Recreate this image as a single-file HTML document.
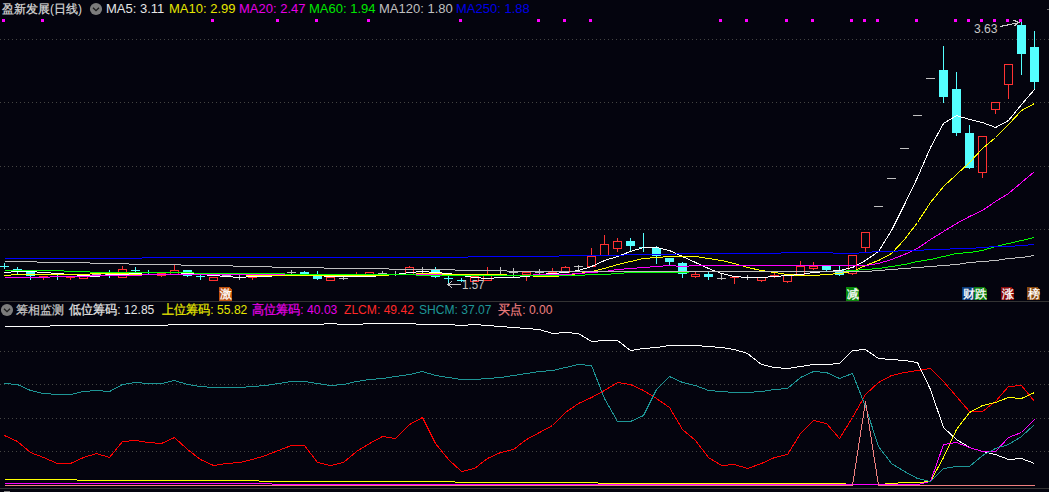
<!DOCTYPE html>
<html><head><meta charset="utf-8">
<style>
html,body{margin:0;padding:0;background:#04040e;}
#root{position:relative;width:1049px;height:492px;overflow:hidden;background:#04040e;font-family:"Liberation Sans",sans-serif;}
svg{position:absolute;left:0;top:0;}
.t{position:absolute;white-space:nowrap;line-height:16px;transform-origin:0 0;}
.z{-webkit-text-stroke:0.25px currentColor;}
.b{position:absolute;width:13px;height:14px;font-size:12px;line-height:14px;color:#fff;text-align:center;-webkit-text-stroke:0.3px #fff;}
</style></head><body>
<div id="root">
<svg width="1049" height="492" viewBox="0 0 1049 492" shape-rendering="crispEdges">
<line x1="0" y1="39.5" x2="1049" y2="39.5" stroke="#444442" stroke-width="1" stroke-dasharray="1 3"/>
<line x1="0" y1="102.5" x2="1049" y2="102.5" stroke="#444442" stroke-width="1" stroke-dasharray="1 3"/>
<line x1="0" y1="166.5" x2="1049" y2="166.5" stroke="#444442" stroke-width="1" stroke-dasharray="1 3"/>
<line x1="0" y1="229.5" x2="1049" y2="229.5" stroke="#444442" stroke-width="1" stroke-dasharray="1 3"/>
<line x1="0" y1="351.5" x2="1049" y2="351.5" stroke="#444442" stroke-width="1" stroke-dasharray="1 3"/>
<line x1="0" y1="384.5" x2="1049" y2="384.5" stroke="#444442" stroke-width="1" stroke-dasharray="1 3"/>
<line x1="0" y1="418.5" x2="1049" y2="418.5" stroke="#444442" stroke-width="1" stroke-dasharray="1 3"/>
<line x1="0" y1="451.5" x2="1049" y2="451.5" stroke="#444442" stroke-width="1" stroke-dasharray="1 3"/>
<rect x="0" y="301" width="1049" height="1" fill="#333333"/>
<rect x="0" y="488" width="1049" height="1" fill="#333333"/>
<rect x="4" y="263" width="1" height="6" fill="#54ffff"/>
<rect x="0" y="266" width="9" height="1" fill="#54ffff"/>
<rect x="17" y="267" width="1" height="8" fill="#54ffff"/>
<rect x="13" y="269" width="9" height="1" fill="#54ffff"/>
<rect x="30" y="272" width="1" height="8" fill="#54ffff"/>
<rect x="26" y="272" width="9" height="4" fill="#54ffff"/>
<rect x="43" y="276" width="1" height="4" fill="#ff3232"/>
<rect x="39" y="276" width="9" height="1" fill="#ff3232"/>
<rect x="57" y="275" width="1" height="5" fill="#54ffff"/>
<rect x="53" y="276" width="9" height="1" fill="#54ffff"/>
<rect x="70" y="277" width="1" height="3" fill="#ff3232"/>
<rect x="66" y="277" width="9" height="1" fill="#ff3232"/>
<rect x="83" y="274" width="1" height="5" fill="#ff3232"/>
<rect x="79" y="274" width="9" height="5" fill="#04040e"/>
<rect x="79.5" y="274.5" width="8" height="4" fill="none" stroke="#ff3232" stroke-width="1"/>
<rect x="96" y="273" width="1" height="4" fill="#c0c0c0"/>
<rect x="92" y="274" width="9" height="1" fill="#c0c0c0"/>
<rect x="109" y="270" width="1" height="8" fill="#54ffff"/>
<rect x="105" y="274" width="9" height="2" fill="#54ffff"/>
<rect x="122" y="266" width="1" height="12" fill="#ff3232"/>
<rect x="118" y="269" width="9" height="9" fill="#04040e"/>
<rect x="118.5" y="269.5" width="8" height="8" fill="none" stroke="#ff3232" stroke-width="1"/>
<rect x="135" y="267" width="1" height="6" fill="#54ffff"/>
<rect x="131" y="270" width="9" height="1" fill="#54ffff"/>
<rect x="148" y="270" width="1" height="5" fill="#54ffff"/>
<rect x="144" y="272" width="9" height="1" fill="#54ffff"/>
<rect x="161" y="273" width="1" height="4" fill="#ff3232"/>
<rect x="157" y="273" width="9" height="3" fill="#04040e"/>
<rect x="157.5" y="273.5" width="8" height="2" fill="none" stroke="#ff3232" stroke-width="1"/>
<rect x="174" y="265" width="1" height="10" fill="#ff3232"/>
<rect x="170" y="270" width="9" height="5" fill="#04040e"/>
<rect x="170.5" y="270.5" width="8" height="4" fill="none" stroke="#ff3232" stroke-width="1"/>
<rect x="187" y="270" width="1" height="7" fill="#54ffff"/>
<rect x="183" y="270" width="9" height="6" fill="#54ffff"/>
<rect x="200" y="274" width="1" height="6" fill="#54ffff"/>
<rect x="196" y="276" width="9" height="1" fill="#54ffff"/>
<rect x="213" y="277" width="1" height="4" fill="#ff3232"/>
<rect x="209" y="277" width="9" height="4" fill="#04040e"/>
<rect x="209.5" y="277.5" width="8" height="3" fill="none" stroke="#ff3232" stroke-width="1"/>
<rect x="222" y="275" width="9" height="1" fill="#c0c0c0"/>
<rect x="239" y="275" width="1" height="5" fill="#c0c0c0"/>
<rect x="235" y="277" width="9" height="1" fill="#c0c0c0"/>
<rect x="252" y="275" width="1" height="5" fill="#ff3232"/>
<rect x="248" y="275" width="9" height="3" fill="#04040e"/>
<rect x="248.5" y="275.5" width="8" height="2" fill="none" stroke="#ff3232" stroke-width="1"/>
<rect x="261" y="275" width="9" height="1" fill="#ff3232"/>
<rect x="274" y="275" width="9" height="1" fill="#c0c0c0"/>
<rect x="291" y="270" width="1" height="5" fill="#c0c0c0"/>
<rect x="287" y="272" width="9" height="1" fill="#c0c0c0"/>
<rect x="304" y="271" width="1" height="4" fill="#54ffff"/>
<rect x="300" y="272" width="9" height="2" fill="#54ffff"/>
<rect x="317" y="271" width="1" height="9" fill="#54ffff"/>
<rect x="313" y="276" width="9" height="3" fill="#54ffff"/>
<rect x="330" y="277" width="1" height="4" fill="#ff3232"/>
<rect x="326" y="277" width="9" height="4" fill="#04040e"/>
<rect x="326.5" y="277.5" width="8" height="3" fill="none" stroke="#ff3232" stroke-width="1"/>
<rect x="343" y="276" width="1" height="4" fill="#c0c0c0"/>
<rect x="339" y="278" width="9" height="1" fill="#c0c0c0"/>
<rect x="356" y="272" width="1" height="4" fill="#ff3232"/>
<rect x="352" y="274" width="9" height="1" fill="#ff3232"/>
<rect x="369" y="272" width="1" height="3" fill="#ff3232"/>
<rect x="365" y="272" width="9" height="3" fill="#04040e"/>
<rect x="365.5" y="272.5" width="8" height="2" fill="none" stroke="#ff3232" stroke-width="1"/>
<rect x="382" y="271" width="1" height="4" fill="#c0c0c0"/>
<rect x="378" y="273" width="9" height="1" fill="#c0c0c0"/>
<rect x="395" y="271" width="1" height="5" fill="#c0c0c0"/>
<rect x="391" y="274" width="9" height="1" fill="#c0c0c0"/>
<rect x="409" y="266" width="1" height="9" fill="#ff3232"/>
<rect x="405" y="267" width="9" height="8" fill="#04040e"/>
<rect x="405.5" y="267.5" width="8" height="7" fill="none" stroke="#ff3232" stroke-width="1"/>
<rect x="422" y="267" width="1" height="7" fill="#c0c0c0"/>
<rect x="418" y="271" width="9" height="1" fill="#c0c0c0"/>
<rect x="435" y="267" width="1" height="11" fill="#54ffff"/>
<rect x="431" y="270" width="9" height="7" fill="#54ffff"/>
<rect x="448" y="276" width="1" height="9" fill="#54ffff"/>
<rect x="444" y="278" width="9" height="1" fill="#54ffff"/>
<rect x="461" y="278" width="1" height="4" fill="#54ffff"/>
<rect x="457" y="280" width="9" height="1" fill="#54ffff"/>
<rect x="474" y="276" width="1" height="6" fill="#ff3232"/>
<rect x="470" y="276" width="9" height="6" fill="#04040e"/>
<rect x="470.5" y="276.5" width="8" height="5" fill="none" stroke="#ff3232" stroke-width="1"/>
<rect x="487" y="267" width="1" height="14" fill="#ff3232"/>
<rect x="483" y="275" width="9" height="6" fill="#04040e"/>
<rect x="483.5" y="275.5" width="8" height="5" fill="none" stroke="#ff3232" stroke-width="1"/>
<rect x="500" y="267" width="1" height="9" fill="#c0c0c0"/>
<rect x="496" y="275" width="9" height="1" fill="#c0c0c0"/>
<rect x="513" y="268" width="1" height="10" fill="#c0c0c0"/>
<rect x="509" y="272" width="9" height="1" fill="#c0c0c0"/>
<rect x="526" y="272" width="1" height="9" fill="#ff3232"/>
<rect x="522" y="272" width="9" height="3" fill="#04040e"/>
<rect x="522.5" y="272.5" width="8" height="2" fill="none" stroke="#ff3232" stroke-width="1"/>
<rect x="539" y="269" width="1" height="6" fill="#c0c0c0"/>
<rect x="535" y="272" width="9" height="1" fill="#c0c0c0"/>
<rect x="552" y="268" width="1" height="8" fill="#ff3232"/>
<rect x="548" y="272" width="9" height="4" fill="#04040e"/>
<rect x="548.5" y="272.5" width="8" height="3" fill="none" stroke="#ff3232" stroke-width="1"/>
<rect x="565" y="266" width="1" height="7" fill="#ff3232"/>
<rect x="561" y="267" width="9" height="6" fill="#04040e"/>
<rect x="561.5" y="267.5" width="8" height="5" fill="none" stroke="#ff3232" stroke-width="1"/>
<rect x="578" y="265" width="1" height="6" fill="#c0c0c0"/>
<rect x="574" y="266" width="9" height="1" fill="#c0c0c0"/>
<rect x="591" y="248" width="1" height="19" fill="#ff3232"/>
<rect x="587" y="256" width="9" height="11" fill="#04040e"/>
<rect x="587.5" y="256.5" width="8" height="10" fill="none" stroke="#ff3232" stroke-width="1"/>
<rect x="604" y="235" width="1" height="21" fill="#ff3232"/>
<rect x="600" y="244" width="9" height="12" fill="#04040e"/>
<rect x="600.5" y="244.5" width="8" height="11" fill="none" stroke="#ff3232" stroke-width="1"/>
<rect x="617" y="238" width="1" height="14" fill="#ff3232"/>
<rect x="613" y="241" width="9" height="8" fill="#04040e"/>
<rect x="613.5" y="241.5" width="8" height="7" fill="none" stroke="#ff3232" stroke-width="1"/>
<rect x="630" y="238" width="1" height="13" fill="#54ffff"/>
<rect x="626" y="241" width="9" height="5" fill="#54ffff"/>
<rect x="643" y="233" width="1" height="19" fill="#54ffff"/>
<rect x="639" y="247" width="9" height="1" fill="#54ffff"/>
<rect x="656" y="246" width="1" height="18" fill="#54ffff"/>
<rect x="652" y="248" width="9" height="8" fill="#54ffff"/>
<rect x="669" y="258" width="1" height="8" fill="#54ffff"/>
<rect x="665" y="258" width="9" height="4" fill="#54ffff"/>
<rect x="682" y="262" width="1" height="16" fill="#54ffff"/>
<rect x="678" y="263" width="9" height="11" fill="#54ffff"/>
<rect x="695" y="272" width="1" height="6" fill="#ff3232"/>
<rect x="691" y="274" width="9" height="3" fill="#04040e"/>
<rect x="691.5" y="274.5" width="8" height="2" fill="none" stroke="#ff3232" stroke-width="1"/>
<rect x="708" y="272" width="1" height="8" fill="#54ffff"/>
<rect x="704" y="274" width="9" height="3" fill="#54ffff"/>
<rect x="721" y="273" width="1" height="7" fill="#c0c0c0"/>
<rect x="717" y="278" width="9" height="1" fill="#c0c0c0"/>
<rect x="734" y="277" width="1" height="7" fill="#ff3232"/>
<rect x="730" y="277" width="9" height="1" fill="#ff3232"/>
<rect x="747" y="275" width="1" height="5" fill="#c0c0c0"/>
<rect x="743" y="277" width="9" height="1" fill="#c0c0c0"/>
<rect x="761" y="277" width="1" height="5" fill="#ff3232"/>
<rect x="757" y="277" width="9" height="4" fill="#04040e"/>
<rect x="757.5" y="277.5" width="8" height="3" fill="none" stroke="#ff3232" stroke-width="1"/>
<rect x="774" y="273" width="1" height="5" fill="#ff3232"/>
<rect x="770" y="275" width="9" height="1" fill="#ff3232"/>
<rect x="787" y="275" width="1" height="8" fill="#ff3232"/>
<rect x="783" y="275" width="9" height="7" fill="#04040e"/>
<rect x="783.5" y="275.5" width="8" height="6" fill="none" stroke="#ff3232" stroke-width="1"/>
<rect x="800" y="261" width="1" height="15" fill="#ff3232"/>
<rect x="796" y="266" width="9" height="10" fill="#04040e"/>
<rect x="796.5" y="266.5" width="8" height="9" fill="none" stroke="#ff3232" stroke-width="1"/>
<rect x="813" y="262" width="1" height="8" fill="#ff3232"/>
<rect x="809" y="266" width="9" height="3" fill="#04040e"/>
<rect x="809.5" y="266.5" width="8" height="2" fill="none" stroke="#ff3232" stroke-width="1"/>
<rect x="826" y="266" width="1" height="5" fill="#54ffff"/>
<rect x="822" y="266" width="9" height="4" fill="#54ffff"/>
<rect x="839" y="266" width="1" height="10" fill="#54ffff"/>
<rect x="835" y="270" width="9" height="5" fill="#54ffff"/>
<rect x="852" y="255" width="1" height="20" fill="#ff3232"/>
<rect x="848" y="255" width="9" height="19" fill="#04040e"/>
<rect x="848.5" y="255.5" width="8" height="18" fill="none" stroke="#ff3232" stroke-width="1"/>
<rect x="865" y="232" width="1" height="21" fill="#ff3232"/>
<rect x="861" y="232" width="9" height="16" fill="#04040e"/>
<rect x="861.5" y="232.5" width="8" height="15" fill="none" stroke="#ff3232" stroke-width="1"/>
<rect x="874" y="206" width="9" height="1" fill="#c0c0c0"/>
<rect x="887" y="178" width="9" height="1" fill="#c0c0c0"/>
<rect x="900" y="148" width="9" height="1" fill="#c0c0c0"/>
<rect x="913" y="115" width="9" height="1" fill="#c0c0c0"/>
<rect x="926" y="78" width="9" height="1" fill="#c0c0c0"/>
<rect x="943" y="46" width="1" height="57" fill="#54ffff"/>
<rect x="939" y="70" width="9" height="27" fill="#54ffff"/>
<rect x="956" y="72" width="1" height="64" fill="#54ffff"/>
<rect x="952" y="89" width="9" height="44" fill="#54ffff"/>
<rect x="969" y="125" width="1" height="44" fill="#54ffff"/>
<rect x="965" y="133" width="9" height="35" fill="#54ffff"/>
<rect x="982" y="136" width="1" height="42" fill="#ff3232"/>
<rect x="978" y="136" width="9" height="37" fill="#04040e"/>
<rect x="978.5" y="136.5" width="8" height="36" fill="none" stroke="#ff3232" stroke-width="1"/>
<rect x="995" y="102" width="1" height="12" fill="#ff3232"/>
<rect x="991" y="102" width="9" height="8" fill="#04040e"/>
<rect x="991.5" y="102.5" width="8" height="7" fill="none" stroke="#ff3232" stroke-width="1"/>
<rect x="1008" y="64" width="1" height="35" fill="#ff3232"/>
<rect x="1004" y="64" width="9" height="21" fill="#04040e"/>
<rect x="1004.5" y="64.5" width="8" height="20" fill="none" stroke="#ff3232" stroke-width="1"/>
<rect x="1021" y="22" width="1" height="53" fill="#54ffff"/>
<rect x="1017" y="25" width="9" height="29" fill="#54ffff"/>
<rect x="1034" y="31" width="1" height="59" fill="#54ffff"/>
<rect x="1030" y="47" width="9" height="35" fill="#54ffff"/>
<polyline points="4.5,272.5 17.5,271.5 30.5,271.5 43.5,272.5 57.5,273.5 70.5,274.5 83.5,275.5 96.5,276.5 109.5,274.5 122.5,274.5 135.5,273.5 148.5,272.5 161.5,272.5 174.5,272.5 187.5,273.5 200.5,274.5 213.5,275.5 226.5,276.5 239.5,277.5 252.5,276.5 265.5,276.5 278.5,275.5 291.5,275.5 304.5,275.5 317.5,275.5 330.5,276.5 343.5,276.5 356.5,276.5 369.5,276.5 382.5,275.5 395.5,274.5 409.5,272.5 422.5,271.5 435.5,272.5 448.5,273.5 461.5,275.5 474.5,277.5 487.5,278.5 500.5,277.5 513.5,277.5 526.5,276.5 539.5,274.5 552.5,273.5 565.5,272.5 578.5,270.5 591.5,266.5 604.5,260.5 617.5,256.5 630.5,251.5 643.5,247.5 656.5,247.5 669.5,250.5 682.5,256.5 695.5,262.5 708.5,268.5 721.5,273.5 734.5,276.5 747.5,277.5 761.5,277.5 774.5,276.5 787.5,275.5 800.5,274.5 813.5,272.5 826.5,271.5 839.5,270.5 852.5,267.5 865.5,260.5 878.5,251.5 891.5,230.5 904.5,204.5 917.5,177.5 930.5,147.5 943.5,123.5 956.5,115.5 969.5,119.5 982.5,122.5 995.5,127.5 1008.5,120.5 1021.5,104.5 1034.5,89.5" fill="none" stroke="#ffffff" stroke-width="1" stroke-linejoin="miter" stroke-miterlimit="2" />
<polyline points="4.5,275.5 17.5,274.5 30.5,274.5 43.5,274.5 57.5,274.5 70.5,274.5 83.5,274.5 96.5,273.5 109.5,273.5 122.5,273.5 135.5,274.5 148.5,274.5 161.5,274.5 174.5,274.5 187.5,274.5 200.5,274.5 213.5,274.5 226.5,274.5 239.5,274.5 252.5,275.5 265.5,275.5 278.5,275.5 291.5,275.5 304.5,275.5 317.5,275.5 330.5,275.5 343.5,275.5 356.5,275.5 369.5,275.5 382.5,275.5 395.5,274.5 409.5,274.5 422.5,273.5 435.5,273.5 448.5,274.5 461.5,274.5 474.5,274.5 487.5,274.5 500.5,274.5 513.5,275.5 526.5,275.5 539.5,276.5 552.5,276.5 565.5,275.5 578.5,273.5 591.5,271.5 604.5,268.5 617.5,264.5 630.5,261.5 643.5,258.5 656.5,257.5 669.5,256.5 682.5,256.5 695.5,256.5 708.5,258.5 721.5,260.5 734.5,263.5 747.5,267.5 761.5,270.5 774.5,272.5 787.5,274.5 800.5,275.5 813.5,275.5 826.5,274.5 839.5,273.5 852.5,271.5 865.5,265.5 878.5,260.5 891.5,253.5 904.5,239.5 917.5,222.5 930.5,202.5 943.5,186.5 956.5,174.5 969.5,162.5 982.5,148.5 995.5,137.5 1008.5,124.5 1021.5,110.5 1034.5,103.5" fill="none" stroke="#ffff00" stroke-width="1" stroke-linejoin="miter" stroke-miterlimit="2" />
<polyline points="4.5,277.5 17.5,277.5 30.5,277.5 43.5,277.5 57.5,276.5 70.5,276.5 83.5,276.5 96.5,275.5 109.5,275.5 122.5,275.5 135.5,275.5 148.5,274.5 161.5,274.5 174.5,274.5 187.5,274.5 200.5,274.5 213.5,274.5 226.5,274.5 239.5,274.5 252.5,274.5 265.5,274.5 278.5,274.5 291.5,274.5 304.5,274.5 317.5,274.5 330.5,274.5 343.5,274.5 356.5,274.5 369.5,274.5 382.5,274.5 395.5,274.5 409.5,274.5 422.5,274.5 435.5,274.5 448.5,275.5 461.5,275.5 474.5,275.5 487.5,275.5 500.5,275.5 513.5,275.5 526.5,275.5 539.5,274.5 552.5,274.5 565.5,274.5 578.5,273.5 591.5,272.5 604.5,271.5 617.5,269.5 630.5,268.5 643.5,267.5 656.5,266.5 669.5,265.5 682.5,266.5 695.5,265.5 708.5,265.5 721.5,265.5 734.5,265.5 747.5,265.5 761.5,265.5 774.5,265.5 787.5,265.5 800.5,265.5 813.5,265.5 826.5,265.5 839.5,265.5 852.5,265.5 865.5,265.5 878.5,263.5 891.5,259.5 904.5,254.5 917.5,248.5 930.5,239.5 943.5,231.5 956.5,223.5 969.5,216.5 982.5,210.5 995.5,201.5 1008.5,193.5 1021.5,182.5 1034.5,171.5" fill="none" stroke="#ff00ff" stroke-width="1" stroke-linejoin="miter" stroke-miterlimit="2" />
<polyline points="4.5,270.5 17.5,270.5 30.5,270.5 43.5,270.5 57.5,270.5 70.5,271.5 83.5,271.5 96.5,272.5 109.5,272.5 122.5,272.5 135.5,272.5 148.5,272.5 161.5,272.5 174.5,272.5 187.5,272.5 200.5,273.5 213.5,273.5 226.5,273.5 239.5,273.5 252.5,273.5 265.5,273.5 278.5,273.5 291.5,274.5 304.5,274.5 317.5,274.5 330.5,274.5 343.5,274.5 356.5,274.5 369.5,274.5 382.5,274.5 395.5,274.5 409.5,274.5 422.5,275.5 435.5,275.5 448.5,275.5 461.5,275.5 474.5,275.5 487.5,275.5 500.5,275.5 513.5,275.5 526.5,275.5 539.5,275.5 552.5,275.5 565.5,275.5 578.5,275.5 591.5,274.5 604.5,274.5 617.5,273.5 630.5,272.5 643.5,272.5 656.5,272.5 669.5,272.5 682.5,272.5 695.5,271.5 708.5,271.5 721.5,271.5 734.5,271.5 747.5,271.5 761.5,271.5 774.5,271.5 787.5,271.5 800.5,271.5 813.5,271.5 826.5,271.5 839.5,271.5 852.5,270.5 865.5,269.5 878.5,268.5 891.5,266.5 904.5,264.5 917.5,261.5 930.5,259.5 943.5,256.5 956.5,253.5 969.5,252.5 982.5,250.5 995.5,246.5 1008.5,243.5 1021.5,240.5 1034.5,237.5" fill="none" stroke="#00ff00" stroke-width="1" stroke-linejoin="miter" stroke-miterlimit="2" />
<polyline points="4.5,261.5 17.5,261.5 30.5,261.5 43.5,262.5 57.5,262.5 70.5,262.5 83.5,262.5 96.5,263.5 109.5,263.5 122.5,263.5 135.5,264.5 148.5,264.5 161.5,264.5 174.5,264.5 187.5,265.5 200.5,265.5 213.5,265.5 226.5,265.5 239.5,266.5 252.5,266.5 265.5,266.5 278.5,267.5 291.5,267.5 304.5,267.5 317.5,267.5 330.5,268.5 343.5,268.5 356.5,268.5 369.5,268.5 382.5,268.5 395.5,269.5 409.5,269.5 422.5,269.5 435.5,269.5 448.5,269.5 461.5,270.5 474.5,270.5 487.5,270.5 500.5,270.5 513.5,271.5 526.5,271.5 539.5,271.5 552.5,271.5 565.5,271.5 578.5,271.5 591.5,271.5 604.5,271.5 617.5,271.5 630.5,271.5 643.5,271.5 656.5,271.5 669.5,271.5 682.5,271.5 695.5,271.5 708.5,271.5 721.5,271.5 734.5,271.5 747.5,271.5 761.5,271.5 774.5,271.5 787.5,271.5 800.5,271.5 813.5,271.5 826.5,271.5 839.5,271.5 852.5,271.5 865.5,271.5 878.5,270.5 891.5,269.5 904.5,268.5 917.5,267.5 930.5,266.5 943.5,265.5 956.5,264.5 969.5,262.5 982.5,261.5 995.5,260.5 1008.5,258.5 1021.5,257.5 1034.5,255.5" fill="none" stroke="#c0c0c0" stroke-width="1" stroke-linejoin="miter" stroke-miterlimit="2" />
<polyline points="4.5,258.5 17.5,258.5 30.5,258.5 43.5,258.5 57.5,258.5 70.5,258.5 83.5,258.5 96.5,258.5 109.5,258.5 122.5,258.5 135.5,258.5 148.5,257.5 161.5,257.5 174.5,257.5 187.5,257.5 200.5,257.5 213.5,257.5 226.5,257.5 239.5,257.5 252.5,257.5 265.5,257.5 278.5,257.5 291.5,257.5 304.5,257.5 317.5,257.5 330.5,257.5 343.5,257.5 356.5,257.5 369.5,257.5 382.5,257.5 395.5,257.5 409.5,257.5 422.5,257.5 435.5,257.5 448.5,257.5 461.5,257.5 474.5,256.5 487.5,256.5 500.5,256.5 513.5,256.5 526.5,256.5 539.5,256.5 552.5,256.5 565.5,255.5 578.5,255.5 591.5,255.5 604.5,255.5 617.5,255.5 630.5,254.5 643.5,254.5 656.5,254.5 669.5,254.5 682.5,253.5 695.5,253.5 708.5,253.5 721.5,253.5 734.5,253.5 747.5,253.5 761.5,253.5 774.5,253.5 787.5,252.5 800.5,252.5 813.5,252.5 826.5,252.5 839.5,253.5 852.5,253.5 865.5,252.5 878.5,251.5 891.5,251.5 904.5,250.5 917.5,250.5 930.5,249.5 943.5,249.5 956.5,248.5 969.5,248.5 982.5,247.5 995.5,246.5 1008.5,246.5 1021.5,245.5 1034.5,244.5" fill="none" stroke="#0000ff" stroke-width="1" stroke-linejoin="miter" stroke-miterlimit="2" />
<rect x="2" y="19" width="3" height="3" fill="#ff00ff"/>
<rect x="41" y="19" width="3" height="3" fill="#ff00ff"/>
<rect x="211" y="19" width="3" height="3" fill="#ff00ff"/>
<rect x="276" y="19" width="3" height="3" fill="#ff00ff"/>
<rect x="315" y="19" width="3" height="3" fill="#ff00ff"/>
<rect x="367" y="19" width="3" height="3" fill="#ff00ff"/>
<rect x="459" y="19" width="3" height="3" fill="#ff00ff"/>
<rect x="537" y="19" width="3" height="3" fill="#ff00ff"/>
<rect x="563" y="19" width="3" height="3" fill="#ff00ff"/>
<rect x="589" y="19" width="3" height="3" fill="#ff00ff"/>
<rect x="719" y="19" width="3" height="3" fill="#ff00ff"/>
<rect x="745" y="19" width="3" height="3" fill="#ff00ff"/>
<rect x="785" y="19" width="3" height="3" fill="#ff00ff"/>
<rect x="811" y="19" width="3" height="3" fill="#ff00ff"/>
<rect x="850" y="19" width="3" height="3" fill="#ff00ff"/>
<rect x="863" y="19" width="3" height="3" fill="#ff00ff"/>
<rect x="876" y="19" width="3" height="3" fill="#ff00ff"/>
<rect x="915" y="19" width="3" height="3" fill="#ff00ff"/>
<rect x="954" y="19" width="3" height="3" fill="#ff00ff"/>
<rect x="967" y="19" width="3" height="3" fill="#ff00ff"/>
<rect x="980" y="19" width="3" height="3" fill="#ff00ff"/>
<rect x="993" y="19" width="3" height="3" fill="#ff00ff"/>
<rect x="1006" y="19" width="3" height="3" fill="#ff00ff"/>
<rect x="1019" y="19" width="3" height="3" fill="#ff00ff"/>
<polyline points="4.5,326.5 17.5,326.5 30.5,326.5 43.5,326.5 57.5,325.5 70.5,325.5 83.5,325.5 96.5,325.5 109.5,325.5 122.5,325.5 135.5,325.5 148.5,325.5 161.5,325.5 174.5,324.5 187.5,324.5 200.5,324.5 213.5,324.5 226.5,324.5 239.5,324.5 252.5,324.5 265.5,324.5 278.5,324.5 291.5,324.5 304.5,324.5 317.5,324.5 330.5,323.5 343.5,324.5 356.5,324.5 369.5,323.5 382.5,323.5 395.5,323.5 409.5,323.5 422.5,324.5 435.5,324.5 448.5,324.5 461.5,325.5 474.5,324.5 487.5,325.5 500.5,326.5 513.5,327.5 526.5,328.5 539.5,329.5 552.5,333.5 565.5,332.5 578.5,333.5 591.5,341.5 604.5,340.5 617.5,340.5 630.5,350.5 643.5,348.5 656.5,347.5 669.5,345.5 682.5,345.5 695.5,345.5 708.5,346.5 721.5,347.5 734.5,349.5 747.5,353.5 761.5,364.5 774.5,367.5 787.5,368.5 800.5,366.5 813.5,364.5 826.5,364.5 839.5,363.5 852.5,350.5 865.5,349.5 878.5,358.5 891.5,359.5 904.5,360.5 917.5,362.5 930.5,389.5 943.5,427.5 956.5,439.5 969.5,447.5 982.5,451.5 995.5,454.5 1008.5,459.5 1021.5,458.5 1034.5,463.5" fill="none" stroke="#ffffff" stroke-width="1" stroke-linejoin="miter" stroke-miterlimit="2" />
<polyline points="4.5,435.5 17.5,441.5 30.5,452.5 43.5,457.5 57.5,463.5 70.5,463.5 83.5,457.5 96.5,453.5 109.5,457.5 122.5,441.5 135.5,440.5 148.5,442.5 161.5,443.5 174.5,437.5 187.5,449.5 200.5,459.5 213.5,465.5 226.5,463.5 239.5,462.5 252.5,459.5 265.5,455.5 278.5,450.5 291.5,445.5 304.5,445.5 317.5,462.5 330.5,465.5 343.5,462.5 356.5,451.5 369.5,443.5 382.5,436.5 395.5,438.5 409.5,424.5 422.5,417.5 435.5,443.5 448.5,459.5 461.5,471.5 474.5,468.5 487.5,458.5 500.5,452.5 513.5,449.5 526.5,439.5 539.5,432.5 552.5,425.5 565.5,412.5 578.5,403.5 591.5,397.5 604.5,390.5 617.5,382.5 630.5,384.5 643.5,390.5 656.5,398.5 669.5,407.5 682.5,429.5 695.5,440.5 708.5,457.5 721.5,465.5 734.5,464.5 747.5,468.5 761.5,463.5 774.5,457.5 787.5,454.5 800.5,433.5 813.5,420.5 826.5,423.5 839.5,438.5 852.5,417.5 865.5,394.5 878.5,382.5 891.5,375.5 904.5,372.5 917.5,370.5 930.5,368.5 943.5,381.5 956.5,396.5 969.5,411.5 982.5,411.5 995.5,401.5 1008.5,386.5 1021.5,385.5 1034.5,401.5" fill="none" stroke="#ff0000" stroke-width="1" stroke-linejoin="miter" stroke-miterlimit="2" />
<polyline points="4.5,479.5 17.5,479.5 30.5,479.5 43.5,479.5 57.5,479.5 70.5,479.5 83.5,480.5 96.5,480.5 109.5,480.5 122.5,480.5 135.5,480.5 148.5,480.5 161.5,480.5 174.5,480.5 187.5,480.5 200.5,480.5 213.5,480.5 226.5,480.5 239.5,480.5 252.5,480.5 265.5,481.5 278.5,481.5 291.5,481.5 304.5,481.5 317.5,481.5 330.5,481.5 343.5,481.5 356.5,481.5 369.5,481.5 382.5,481.5 395.5,481.5 409.5,481.5 422.5,481.5 435.5,481.5 448.5,481.5 461.5,482.5 474.5,482.5 487.5,482.5 500.5,482.5 513.5,482.5 526.5,482.5 539.5,482.5 552.5,482.5 565.5,482.5 578.5,482.5 591.5,482.5 604.5,483.5 617.5,483.5 630.5,483.5 643.5,483.5 656.5,483.5 669.5,483.5 682.5,483.5 695.5,483.5 708.5,483.5 721.5,483.5 734.5,483.5 747.5,483.5 761.5,483.5 774.5,483.5 787.5,483.5 800.5,483.5 813.5,483.5 826.5,483.5 839.5,483.5 852.5,484.5 865.5,484.5 878.5,484.5 891.5,483.5 904.5,482.5 917.5,482.5 930.5,481.5 943.5,457.5 956.5,429.5 969.5,412.5 982.5,405.5 995.5,402.5 1008.5,397.5 1021.5,398.5 1034.5,392.5" fill="none" stroke="#ffff00" stroke-width="1" stroke-linejoin="miter" stroke-miterlimit="2" />
<polyline points="4.5,483.5 17.5,483.5 30.5,483.5 43.5,483.5 57.5,483.5 70.5,483.5 83.5,483.5 96.5,483.5 109.5,483.5 122.5,483.5 135.5,483.5 148.5,483.5 161.5,483.5 174.5,483.5 187.5,483.5 200.5,483.5 213.5,483.5 226.5,483.5 239.5,483.5 252.5,483.5 265.5,483.5 278.5,484.5 291.5,484.5 304.5,484.5 317.5,484.5 330.5,484.5 343.5,484.5 356.5,484.5 369.5,484.5 382.5,484.5 395.5,484.5 409.5,484.5 422.5,484.5 435.5,484.5 448.5,484.5 461.5,484.5 474.5,484.5 487.5,484.5 500.5,484.5 513.5,484.5 526.5,484.5 539.5,484.5 552.5,484.5 565.5,484.5 578.5,484.5 591.5,484.5 604.5,484.5 617.5,484.5 630.5,484.5 643.5,484.5 656.5,484.5 669.5,484.5 682.5,484.5 695.5,484.5 708.5,484.5 721.5,484.5 734.5,484.5 747.5,484.5 761.5,484.5 774.5,484.5 787.5,484.5 800.5,484.5 813.5,484.5 826.5,484.5 839.5,484.5 852.5,484.5 865.5,484.5 878.5,484.5 891.5,484.5 904.5,484.5 917.5,484.5 930.5,481.5 943.5,444.5 956.5,442.5 969.5,447.5 982.5,451.5 995.5,451.5 1008.5,437.5 1021.5,432.5 1034.5,419.5" fill="none" stroke="#ff00ff" stroke-width="1" stroke-linejoin="miter" stroke-miterlimit="2" />
<polyline points="4.5,383.5 17.5,384.5 30.5,390.5 43.5,393.5 57.5,394.5 70.5,394.5 83.5,391.5 96.5,390.5 109.5,391.5 122.5,384.5 135.5,382.5 148.5,383.5 161.5,383.5 174.5,380.5 187.5,384.5 200.5,386.5 213.5,387.5 226.5,387.5 239.5,387.5 252.5,386.5 265.5,385.5 278.5,383.5 291.5,381.5 304.5,381.5 317.5,383.5 330.5,385.5 343.5,384.5 356.5,381.5 369.5,379.5 382.5,378.5 395.5,376.5 409.5,374.5 422.5,371.5 435.5,375.5 448.5,377.5 461.5,379.5 474.5,379.5 487.5,378.5 500.5,377.5 513.5,375.5 526.5,373.5 539.5,371.5 552.5,370.5 565.5,367.5 578.5,364.5 591.5,365.5 604.5,398.5 617.5,421.5 630.5,421.5 643.5,415.5 656.5,389.5 669.5,376.5 682.5,382.5 695.5,385.5 708.5,390.5 721.5,391.5 734.5,392.5 747.5,392.5 761.5,391.5 774.5,389.5 787.5,388.5 800.5,377.5 813.5,371.5 826.5,372.5 839.5,378.5 852.5,373.5 865.5,406.5 878.5,446.5 891.5,463.5 904.5,471.5 917.5,478.5 930.5,481.5 943.5,468.5 956.5,466.5 969.5,466.5 982.5,455.5 995.5,448.5 1008.5,444.5 1021.5,436.5 1034.5,424.5" fill="none" stroke="#1e9696" stroke-width="1" stroke-linejoin="miter" stroke-miterlimit="2" />
<polyline points="4.5,485.5 17.5,485.5 30.5,485.5 43.5,485.5 57.5,485.5 70.5,485.5 83.5,485.5 96.5,485.5 109.5,485.5 122.5,485.5 135.5,485.5 148.5,485.5 161.5,485.5 174.5,485.5 187.5,485.5 200.5,485.5 213.5,485.5 226.5,485.5 239.5,485.5 252.5,485.5 265.5,485.5 278.5,485.5 291.5,485.5 304.5,485.5 317.5,485.5 330.5,485.5 343.5,485.5 356.5,485.5 369.5,485.5 382.5,485.5 395.5,485.5 409.5,485.5 422.5,485.5 435.5,485.5 448.5,485.5 461.5,485.5 474.5,485.5 487.5,485.5 500.5,485.5 513.5,485.5 526.5,485.5 539.5,485.5 552.5,485.5 565.5,485.5 578.5,485.5 591.5,485.5 604.5,485.5 617.5,485.5 630.5,485.5 643.5,485.5 656.5,485.5 669.5,485.5 682.5,485.5 695.5,485.5 708.5,485.5 721.5,485.5 734.5,485.5 747.5,485.5 761.5,485.5 774.5,485.5 787.5,485.5 800.5,485.5 813.5,485.5 826.5,485.5 839.5,485.5 852.5,485.5 865.5,401.5 878.5,485.5 891.5,485.5 904.5,485.5 917.5,485.5 930.5,485.5 943.5,485.5 956.5,485.5 969.5,485.5 982.5,485.5 995.5,485.5 1008.5,485.5 1021.5,485.5 1034.5,485.5" fill="none" stroke="#f08080" stroke-width="1" stroke-linejoin="miter" stroke-miterlimit="2" />
<polyline points="1000,26.5 1010,24.5 1019,22.5" fill="none" stroke="#c8c8c8" stroke-width="1"/>
<polyline points="1013,20 1019,22.5 1014,26" fill="none" stroke="#c8c8c8" stroke-width="1"/>
<line x1="448" y1="284.5" x2="461" y2="284.5" stroke="#c8c8c8" stroke-width="1"/>
<polyline points="452,281 448,284.5 452,288" fill="none" stroke="#c8c8c8" stroke-width="1"/>
<g shape-rendering="geometricPrecision"><circle cx="96" cy="9" r="6.1" fill="#7c7c7c"/><polyline points="93,7.7 96,10.6 99,7.7" fill="none" stroke="#1c1c1c" stroke-width="1.3"/></g>
<g shape-rendering="geometricPrecision"><circle cx="7" cy="310" r="6.1" fill="#7c7c7c"/><polyline points="4,308.7 7,311.6 10,308.7" fill="none" stroke="#1c1c1c" stroke-width="1.3"/></g>
<path d="M219 287 H229 L232 290 V301 H219 Z" fill="#bf500c"/>
<path d="M846 287 H856 L859 290 V301 H846 Z" fill="#0a8a0a"/>
<rect x="962" y="287" width="12" height="13" fill="#0a3a7a"/>
<path d="M974 287 H984 L987 290 V300 H974 Z" fill="#0a7a0a"/>
<path d="M1001 287 H1011 L1014 290 V300 H1001 Z" fill="#8a0a0a"/>
<path d="M1027 287 H1037 L1040 290 V300 H1027 Z" fill="#8a4a10"/>
<rect x="4" y="491" width="6" height="1" fill="#808080"/>
<rect x="1047" y="9" width="2" height="1" fill="#707070"/>
</svg>
<div class="t" style="left:2px;top:1px;color:#d8d8d8;font-size:12px;"><span class="z">盈新发展</span>(<span class="z">日线</span>)</div><div class="t" style="left:106px;top:1px;color:#e6e6e6;font-size:13px;">MA5: 3.11</div><div class="t" style="left:169px;top:1px;color:#e6e600;font-size:13px;">MA10: 2.99</div><div class="t" style="left:239px;top:1px;color:#e600e6;font-size:13px;">MA20: 2.47</div><div class="t" style="left:309px;top:1px;color:#00e600;font-size:13px;">MA60: 1.94</div><div class="t" style="left:379px;top:1px;color:#c0c0c0;font-size:13px;">MA120: 1.80</div><div class="t" style="left:456px;top:1px;color:#0000e6;font-size:13px;">MA250: 1.88</div><div class="t" style="left:974px;top:21px;color:#c8c8c8;font-size:13px;transform:scaleX(0.93);">3.63</div><div class="t" style="left:462px;top:277px;color:#c8c8c8;font-size:13px;transform:scaleX(0.89);">1.57</div><div class="t" style="left:16px;top:302px;color:#c8c8c8;font-size:12px;"><span class="z">筹相监测</span></div><div class="t" style="left:69px;top:302px;color:#e6e6e6;font-size:13px;transform:scaleX(0.93);"><span class="z">低位筹码</span>: 12.85</div><div class="t" style="left:162px;top:302px;color:#e6e600;font-size:13px;transform:scaleX(0.93);"><span class="z">上位筹码</span>: 55.82</div><div class="t" style="left:252px;top:302px;color:#e600e6;font-size:13px;transform:scaleX(0.93);"><span class="z">高位筹码</span>: 40.03</div><div class="t" style="left:344px;top:302px;color:#ff2828;font-size:13px;transform:scaleX(0.93);">ZLCM: 49.42</div><div class="t" style="left:419px;top:302px;color:#1e9696;font-size:13px;transform:scaleX(0.93);">SHCM: 37.07</div><div class="t" style="left:498px;top:302px;color:#f08080;font-size:13px;transform:scaleX(0.93);"><span class="z">买点</span>: 0.00</div><div class="b" style="left:219px;top:287px">激</div><div class="b" style="left:846px;top:287px">减</div><div class="b" style="left:962px;top:287px">财</div><div class="b" style="left:974px;top:287px">跌</div><div class="b" style="left:1001px;top:287px">涨</div><div class="b" style="left:1027px;top:287px">榜</div>
</div>
</body></html>
